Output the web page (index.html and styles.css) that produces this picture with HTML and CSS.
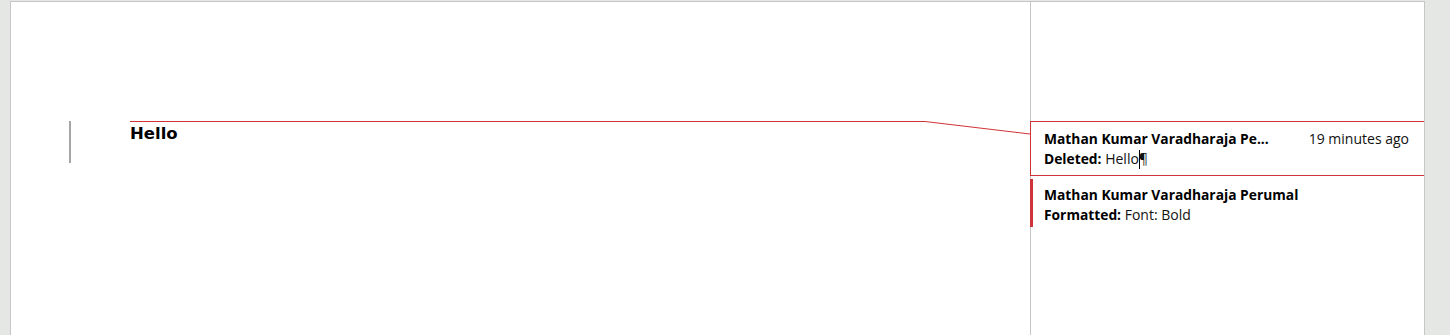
FILE: index.html
```html
<!DOCTYPE html>
<html>
<head>
<meta charset="utf-8">
<link rel="stylesheet" href="styles.css">
</head>
<body>
<div class="page">
  <div class="doc">
    <div class="para">
      <span class="change-bar"></span>
      <span class="hello">Hello</span>
    </div>
  </div>
  <div class="pane">
    <div class="card active">
      <div class="row">
        <span class="name trunc">Mathan Kumar Varadharaja Pe...</span>
        <span class="time">19 minutes ago</span>
      </div>
      <div class="row"><span class="label">Deleted:</span>&nbsp;Hello<span class="caret"></span>¶</div>
    </div>
    <div class="card flag">
      <div class="row"><span class="name">Mathan Kumar Varadharaja Perumal</span></div>
      <div class="row"><span class="label">Formatted:</span>&nbsp;Font: Bold</div>
    </div>
  </div>
  <svg class="connector" width="1450" height="335" viewBox="0 0 1450 335">
    <polyline points="130,121.5 925,121.5 1030,134" fill="none" stroke="#d13438" stroke-width="1"/>
  </svg>
</div>
</body>
</html>
```
FILE: styles.css
```css
html, body {
  margin: 0;
  padding: 0;
  height: 100%;
}
body {
  background: #e4e7e3;
  overflow: hidden;
}
.page {
  position: relative;
  margin: 1px 0 0 10px;
  width: 1413px;
  height: 340px;
  background: #fff;
  border: 1px solid #c6c6c6;
  border-bottom: none;
  display: grid;
  grid-template-columns: 1019px 1fr;
}
.doc {
  padding-top: 119px;
}
.para {
  display: flex;
  align-items: flex-start;
  height: 42px;
}
.change-bar {
  width: 2px;
  height: 42px;
  background: #a6a6a6;
  margin-left: 58px;
}
.hello {
  margin-left: 59px;
  margin-top: 2px;
  font-family: "DejaVu Sans", sans-serif;
  font-weight: bold;
  font-size: 16.5px;
  line-height: 22px;
  color: #000;
}
.pane {
  border-left: 1px solid #c6c6c6;
  padding-top: 119px;
  font-family: "Open Sans", sans-serif;
  font-size: 14px;
  color: #111;
}
.card {
  display: flex;
  flex-direction: column;
}
.card.active {
  border-top: 1px solid #d13438;
  border-bottom: 1px solid #d13438;
  margin-left: -1px;
  border-left: 1px solid #d13438;
  padding: 7px 15px 6px 13px;
  height: 40px;
}
.card.flag {
  margin-top: 3px;
  margin-left: -1px;
  border-left: 3px solid #d13438;
  padding: 6px 15px 0 11px;
  height: 42px;
}
.row {
  display: flex;
  align-items: center;
  height: 20px;
  line-height: 20px;
  white-space: nowrap;
}
.name, .label {
  font-weight: bold;
  font-size: 13.8px;
  color: #000;
}
.time {
  margin-left: auto;
  color: #111;
}
.caret {
  display: inline-block;
  width: 1px;
  height: 19px;
  background: #000;
  margin: 0 -1px 0 0;
}
.connector {
  position: absolute;
  left: -11px;
  top: -2px;
  pointer-events: none;
}
```
